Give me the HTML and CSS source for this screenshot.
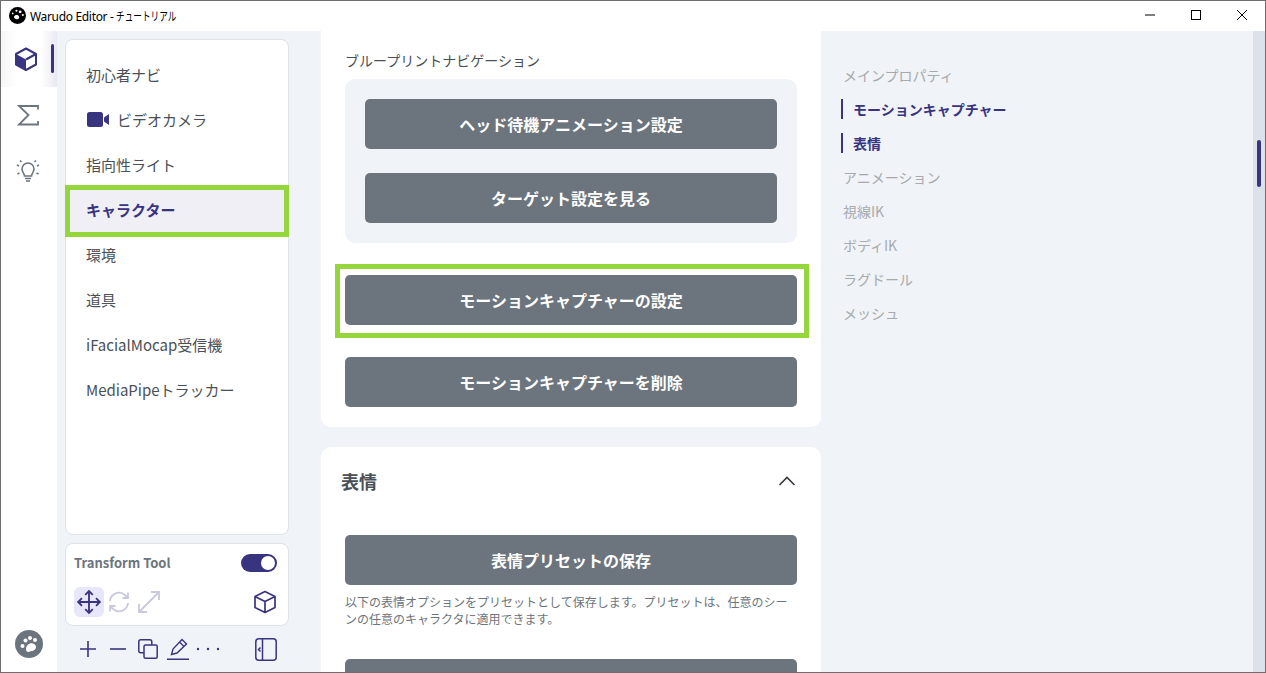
FILE: index.html
```html
<!DOCTYPE html>
<html lang="ja">
<head>
<meta charset="utf-8">
<title>Warudo Editor - チュートリアル</title>
<link rel="stylesheet" href="styles.css">
</head>
<body>
<div class="window">
  <header class="titlebar">
    <svg class="logo" viewBox="0 0 16 16"><circle cx="8" cy="8" r="8" fill="#000"/><circle cx="10.500" cy="4.500" r="1.300" fill="#fff"/><circle cx="7" cy="3.500" r="1" fill="#fff"/><circle cx="13" cy="7.500" r="1" fill="#fff"/><circle cx="3.500" cy="6" r=".8" fill="#fff"/><path d="M5 8.500c1-1.500 4-1.500 4.500 0.500s-1 3-2.500 2.500-3-1.500-2-3z" fill="#fff"/></svg>
    <span class="title-text">Warudo Editor - <span class="title-kana">チュートリアル</span></span>
    <div class="winctl">
      <svg viewBox="0 0 10 10"><path d="M0 5h10" stroke="#000" fill="none"/></svg>
      <svg viewBox="0 0 10 10"><rect x=".5" y=".5" width="9" height="9" stroke="#000" fill="none"/></svg>
      <svg viewBox="0 0 10 10"><path d="M0 0l10 10M10 0L0 10" stroke="#000" fill="none"/></svg>
    </div>
  </header>
  <div class="body">
    <nav class="rail">
      <div class="rail-item active">
        <svg class="rail-icon rail-cube" viewBox="0 0 24 24"><path d="M12 1.500l10 5.500v10.500l-10 5.500-10-5.500V7z" fill="#fff" stroke="#38347f" stroke-width="2" stroke-linejoin="round"/><path d="M2 7l10 5.500V23L2 17.500z" fill="#38347f"/><path d="M22 7l-10 5.500" stroke="#38347f" stroke-width="2" fill="none"/></svg>
        <span class="rail-mark"></span>
      </div>
      <div class="rail-item">
        <svg class="rail-icon" viewBox="0 0 24 24"><path d="M22 6.500V3H3l9.500 9L3 21.500h19V18" fill="none" stroke="#6c757d" stroke-width="1.800"/></svg>
      </div>
      <div class="rail-item">
        <svg class="rail-icon" viewBox="0 0 24 24"><path d="M8.500 17c0-2.500-2.500-3.500-2.500-7a6 6 0 0 1 12 0c0 3.500-2.500 4.500-2.500 7z" fill="none" stroke="#6c757d" stroke-width="1.600"/><path d="M9 19.500h6M10 22h4M1 6l2 1M23 6l-2 1M4 1.500l1.500 1.500M20 1.500L18.500 3M1.500 15l2-1M22.500 15l-2-1" fill="none" stroke="#6c757d" stroke-width="1.600"/></svg>
      </div>
      <div class="rail-spacer"></div>
      <svg class="avatar" viewBox="0 0 28 28"><circle cx="14" cy="14" r="14" fill="#6c757d"/><circle cx="10.500" cy="10.500" r="2" fill="#fff"/><circle cx="15" cy="8" r="2" fill="#fff"/><circle cx="20" cy="10" r="2" fill="#fff"/><circle cx="7.500" cy="16" r="2" fill="#fff"/><path d="M11 19c0-4 4-6.500 7-5.500s4 4 2 6-3 1-5 2-4 .5-4-2.500z" fill="#fff"/></svg>
    </nav>
    <aside class="side">
      <div class="side-card">
        <div class="side-item">初心者ナビ</div>
        <div class="side-item">
          <svg class="cam" viewBox="0 0 22 15"><rect x="0" y="0" width="16" height="15" rx="2.500" fill="#38347f"/><path d="M17 5.500L22 2v11l-5-3.500z" fill="#38347f"/></svg>
          ビデオカメラ
        </div>
        <div class="side-item">指向性ライト</div>
        <div class="side-item selected">キャラクター<span class="mark mark-side"></span></div>
        <div class="side-item">環境</div>
        <div class="side-item">道具</div>
        <div class="side-item">iFacialMocap受信機</div>
        <div class="side-item">MediaPipeトラッカー</div>
      </div>
      <div class="tool-card">
        <div class="tool-head">
          <span class="tool-title">Transform Tool</span>
          <span class="toggle"><span class="knob"></span></span>
        </div>
        <div class="tool-row">
          <span class="tool-btn on">
            <svg viewBox="0 0 24 24"><path d="M12 2v20M2 12h20M8.500 5.500L12 2l3.500 3.500M8.500 18.500L12 22l3.500-3.500M5.500 8.500L2 12l3.500 3.500M18.500 8.500L22 12l-3.500 3.500" fill="none" stroke="#38347f" stroke-width="1.700"/></svg>
          </span>
          <span class="tool-btn">
            <svg viewBox="0 0 24 24"><path d="M3 11a9 9 0 0 1 15-6l3 3M21 13a9 9 0 0 1-15 6l-3-3M21 2.500V8h-5.500M3 21.500V16h5.500" fill="none" stroke="#c9c9dc" stroke-width="1.800"/></svg>
          </span>
          <span class="tool-btn">
            <svg viewBox="0 0 24 24"><path d="M2 22L22 2M14 2h8v8M2 14v8h8" fill="none" stroke="#c9c9dc" stroke-width="1.800"/></svg>
          </span>
          <span class="tool-spacer"></span>
          <svg class="tool-cube" viewBox="0 0 24 24"><path d="M12 1.500l10 5v11l-10 5-10-5v-11zM2 6.500l10 5 10-5M12 11.500v11" fill="none" stroke="#38347f" stroke-width="1.700" stroke-linejoin="round"/></svg>
        </div>
      </div>
      <div class="side-bar">
        <svg class="bar-plus" viewBox="0 0 16 16"><path d="M8 0v16M0 8h16" stroke="#38347f" stroke-width="1.600" fill="none"/></svg>
        <svg class="bar-minus" viewBox="0 0 16 16"><path d="M0 8h16" stroke="#38347f" stroke-width="1.600" fill="none"/></svg>
        <svg class="bar-copy" viewBox="0 0 20 20"><rect x=".8" y=".8" width="13" height="13" rx="2" fill="none" stroke="#38347f" stroke-width="1.500"/><rect x="6" y="6" width="13.200" height="13.200" rx="1.500" fill="#f0f3f7" stroke="#38347f" stroke-width="1.500"/></svg>
        <svg class="bar-pen" viewBox="0 0 22 22"><path d="M4.500 16.500l1.500-5.500 9-9.500 4.500 4.500-9.500 9zM12.500 4l4.500 4.500M0 21.300h22" fill="none" stroke="#38347f" stroke-width="1.400"/></svg>
        <svg class="bar-dots" viewBox="0 0 24 8"><circle cx="2" cy="4" r="1.200" fill="#38347f"/><circle cx="12" cy="4" r="1.200" fill="#38347f"/><circle cx="22" cy="4" r="1.200" fill="#38347f"/></svg>
        <span class="tool-spacer"></span>
        <svg class="bar-panel" viewBox="0 0 22 23"><rect x=".8" y=".8" width="20.400" height="21.400" rx="3" fill="none" stroke="#38347f" stroke-width="1.500"/><path d="M7.500 1v21M5.500 9.500L3.500 11.500l2 2" fill="none" stroke="#38347f" stroke-width="1.500"/></svg>
      </div>
    </aside>
    <main class="main">
      <section class="card card-top">
        <p class="label">ブループリントナビゲーション</p>
        <div class="group">
          <button class="btn">ヘッド待機アニメーション設定</button>
          <button class="btn">ターゲット設定を見る</button>
        </div>
        <button class="btn btn-marked">モーションキャプチャーの設定<span class="mark mark-btn"></span></button>
        <button class="btn">モーションキャプチャーを削除</button>
      </section>
      <section class="card card-second">
        <div class="card-head">
          <h2>表情</h2>
          <svg class="chev" viewBox="0 0 18 10"><path d="M1.500 9L9 1.500 16.500 9" fill="none" stroke="#343a40" stroke-width="1.600"/></svg>
        </div>
        <button class="btn">表情プリセットの保存</button>
        <p class="desc">以下の表情オプションをプリセットとして保存します。プリセットは、任意のシーンの任意のキャラクタに適用できます。</p>
        <button class="btn"></button>
      </section>
    </main>
    <aside class="toc">
      <div class="toc-item">メインプロパティ</div>
      <div class="toc-item on">モーションキャプチャー</div>
      <div class="toc-item on">表情</div>
      <div class="toc-item">アニメーション</div>
      <div class="toc-item">視線IK</div>
      <div class="toc-item">ボディIK</div>
      <div class="toc-item">ラグドール</div>
      <div class="toc-item">メッシュ</div>
    </aside>
    <div class="scroll"><span class="thumb"></span></div>
  </div>
</div>
</body>
</html>
```
FILE: styles.css
```css
* { box-sizing: border-box; }
html, body { margin: 0; height: 100%; overflow: hidden; }
body { font-family: "Noto Sans CJK JP", "Noto Sans", sans-serif; color: #495057; background: #fff; }
.window { width: 1266px; height: 673px; border: 1px solid #6e6e6e; display: flex; flex-direction: column; overflow: hidden; }

.titlebar { height: 30px; flex: none; display: flex; align-items: center; padding-left: 8px; background: #fff; }
.logo { width: 17px; height: 17px; margin-right: 4px; margin-bottom: 2px; }
.title-text { font-family: "Noto Sans", "Noto Sans CJK JP", sans-serif; font-size: 12px; letter-spacing: -.33px; color: #000; white-space: nowrap; }
.title-kana { display: inline-block; letter-spacing: 0; transform: scaleX(.72); transform-origin: left center; }
.winctl { margin-left: auto; display: flex; }
.winctl svg { width: 46px; height: 30px; padding: 9px 18px 11px; }

.body { flex: 1; min-height: 0; display: flex; background: #f0f3f7; }

.rail { width: 56px; flex: none; background: #fff; display: flex; flex-direction: column; }
.rail-item { height: 56px; flex: none; display: flex; align-items: center; justify-content: center; position: relative; }
.rail-item.active { background: linear-gradient(90deg, #f6f6f8 0, #fff 30%, #fff 72%, #e9e8f2 100%); }
.rail-icon { width: 24px; height: 24px; margin-right: 2px; }
.rail-cube { margin-right: 6px; }
.rail-mark { position: absolute; left: 50px; top: 13px; width: 3px; height: 29px; border-radius: 2px; background: #38347f; }
.rail-spacer { flex: 1; }
.avatar { width: 28px; height: 28px; margin: 0 0 14px 14px; }

.side { width: 248px; flex: none; padding: 8px 16px 0 8px; display: flex; flex-direction: column; }
.side-card { height: 496px; flex: none; background: #fff; border: 1px solid #dee3ea; border-radius: 8px; padding-top: 12px; }
.side-item { height: 45px; display: flex; align-items: center; padding-left: 20px; font-size: 15px; color: #495057; position: relative; }
.side-item.selected { font-weight: 700; color: #38347f; background: #f0eff5; }
.cam { width: 22px; height: 15px; margin: 0 8px 0 1px; }
.mark { position: absolute; border: 5px solid #94d63c; pointer-events: none; }
.mark-side { left: -1px; right: -1px; top: -2px; height: 52px; }

.tool-card { height: 83px; margin-top: 8px; flex: none; background: #fff; border: 1px solid #dee3ea; border-radius: 8px; padding: 8px 11px 0 8px; }
.tool-head { display: flex; align-items: center; justify-content: space-between; height: 21px; }
.tool-title { font-size: 13px; font-weight: 700; color: #6c757d; }
.toggle { width: 36px; height: 18px; margin-top: 1px; border-radius: 9px; background: #38347f; display: flex; align-items: center; justify-content: flex-end; padding-right: 2px; }
.knob { width: 14px; height: 14px; border-radius: 50%; background: #fff; }
.tool-row { display: flex; align-items: center; margin-top: 14px; }
.tool-btn { width: 30px; height: 30px; border-radius: 6px; display: flex; align-items: center; justify-content: center; }
.tool-btn svg { width: 24px; height: 24px; flex: none; }
.tool-btn.on svg { width: 26px; height: 26px; }
.tool-btn.on { background: #e7e6fa; }
.tool-spacer { flex: 1; }
.tool-cube { width: 24px; height: 24px; }

.side-bar { display: flex; align-items: center; margin-top: 9px; height: 28px; padding: 0 12px 0 15px; }
.bar-plus { width: 16px; height: 16px; flex: none; }
.bar-minus { width: 16px; height: 16px; flex: none; margin-left: 14px; }
.bar-copy { width: 20px; height: 20px; flex: none; margin-left: 12px; }
.bar-pen { width: 22px; height: 22px; flex: none; margin-left: 9px; }
.bar-dots { width: 24px; height: 8px; flex: none; margin-left: 7px; }
.bar-panel { width: 22px; height: 23px; flex: none; }

.main { width: 500px; flex: none; margin-left: 16px; overflow: hidden; }
.card { background: #fff; border-radius: 10px; padding: 0 24px; }
.card-top { border-radius: 0 0 10px 10px; padding-top: 19px; padding-bottom: 20px; height: 396px; }
.label { margin: 0 0 9px; font-size: 14px; line-height: 20px; color: #495057; }
.group { background: #f0f3f7; border-radius: 10px; padding: 20px; display: flex; flex-direction: column; gap: 24px; height: 164px; margin-bottom: 32px; }
.btn { display: block; width: 100%; height: 50px; flex: none; border: 0; border-radius: 5px; background: #6c757d; color: #fff; font: 700 16px "Noto Sans CJK JP", sans-serif; position: relative; padding: 0; }
.btn-marked { margin-bottom: 32px; }
.mark-btn { left: -10px; right: -12px; top: -11px; bottom: -13px; }
.card-second { margin-top: 20px; height: 260px; }
.card-head { display: flex; align-items: center; justify-content: space-between; height: 88px; margin: 0 -4px; padding-right: 5px; padding-bottom: 20px; }
.card-head h2 { margin: 0; font-size: 18px; font-weight: 700; color: #495057; line-height: 26px; }
.chev { width: 18px; height: 10px; }
.desc { margin: 8px 0 32px; font-size: 12px; line-height: 17px; color: #6c757d; }

.toc { flex: 1; padding: 26.5px 0 0 22px; }
.toc-item { height: 34px; display: flex; align-items: center; font-size: 14px; color: #a7aaad; position: relative; }
.toc-item.on { color: #38347f; font-weight: 700; padding-left: 10px; }
.toc-item.on::before { content: ""; position: absolute; left: -2px; top: 7.5px; width: 2px; height: 20px; background: #38347f; }

.scroll { width: 12px; flex: none; background: #dbe2ea; position: relative; }
.thumb { position: absolute; left: 4px; top: 109px; width: 4px; height: 47px; border-radius: 2px; background: #38347f; }
```
